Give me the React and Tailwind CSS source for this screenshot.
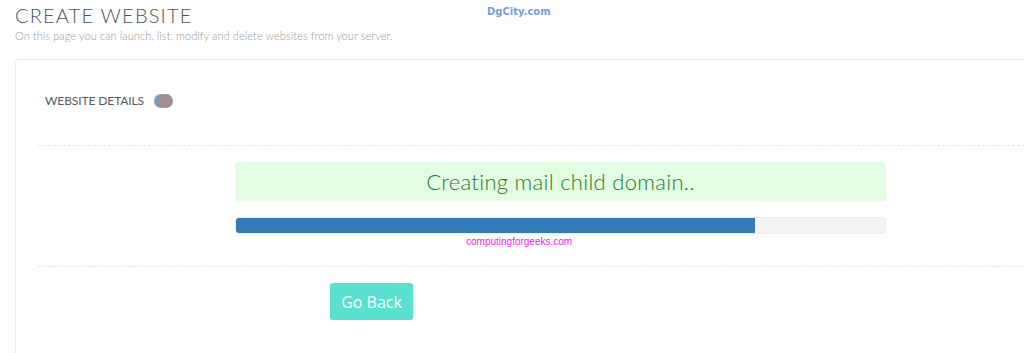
import React from 'react';

const App = () => {
  const progress = 80;

  return (
    <div className="w-[1024px] h-[353px] overflow-hidden bg-white font-['Lato',sans-serif] relative">
      {/* Watermark */}
      <span className="absolute left-[487px] top-[4px] text-[10px] font-bold text-[#6f9fdc] font-['DejaVu_Sans',sans-serif]">
        DgCity.com
      </span>

      {/* Page header */}
      <div className="pl-[15px] pt-[3px]">
        <h1 className="text-[20px] leading-[24px] font-light text-[#4a5260] tracking-[1.2px]">CREATE WEBSITE</h1>
        <p className="text-[11px] leading-[14px] font-light text-[#9a9a9a] mt-[2px] tracking-[0.08px]">
          On this page you can launch, list, modify and delete websites from your server.
        </p>
      </div>

      {/* Card */}
      <div className="ml-[15px] mt-[16px] w-[1030px] h-[320px] border-l border-t border-[#e9eef4] rounded-tl-[4px]">
        <div className="flex items-center pl-[29px] pt-[21px] h-[72px] pb-[12px]">
          <span className="text-[12px] text-[#5a5a5a] uppercase tracking-[-0.1px]">Website Details</span>
          <span className="relative ml-[10px] w-[19px] h-[14px]">
            <span className="absolute left-0 top-0 w-[14px] h-[14px] rounded-full bg-[#7c9cba]" />
            <span className="absolute left-[4px] top-0 w-[15px] h-[14px] rounded-full bg-[#a38f90]" />
          </span>
        </div>

        <div className="ml-[22px] mt-[13px] border-t border-dashed border-[#e6eaf0]" />

        <div className="pl-[219px] pt-[16px]">
          <div className="w-[651px] h-[39px] rounded-[3px] bg-[#e2fde1] flex items-center justify-center">
            <span className="text-[22px] font-light text-[#2c7a2c] tracking-[0.3px]">Creating mail child domain..</span>
          </div>

          <div className="mt-[16px] w-[651px] h-[17px] rounded-[4px] bg-[#f3f3f3] border border-[#ececec] overflow-hidden">
            <div className="h-full bg-[#337ab7]" style={{ width: `${progress}%` }} />
          </div>

          <div className="pl-[231px] mt-[1px] text-[10px] leading-[14px] text-[#f01ef0] font-['Liberation_Sans',sans-serif]">
            computingforgeeks.com
          </div>
        </div>

        <div className="ml-[22px] mt-[17px] border-t border-dashed border-[#e6eaf0]" />

        <div className="pl-[314px] pt-[16px]">
          <button className="w-[83px] h-[37px] rounded-[3px] bg-[#5ae0cf] text-white text-[16px] font-['Open_Sans',sans-serif]">
            Go Back
          </button>
        </div>
      </div>
    </div>
  );
};

export default App;
